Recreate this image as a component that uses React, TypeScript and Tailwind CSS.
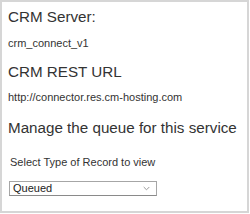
import React from "react";

export default function App() {
  return (
    <div className="w-[250px] h-[214px] bg-white" style={{ fontFamily: '"Liberation Sans", Arial, sans-serif' }}>
      <div className="w-[249px] h-[213px] border-2 border-[#d6d6d6] box-border pl-[6px] pt-[6px] text-[#333]">
        <div className="text-[15.2px] leading-[18px]">CRM Server:</div>
        <div className="mt-[11px] text-[11px] leading-[13px]">crm_connect_v1</div>
        <div className="mt-[13px] text-[15.2px] leading-[18px]">CRM REST URL</div>
        <div className="mt-[10px] text-[11px] leading-[13px]">http://connector.res.cm-hosting.com</div>
        <div className="mt-[15px] text-[15.2px] leading-[18px] whitespace-nowrap">Manage the queue for this service</div>
        <div className="mt-[19px] pl-[2px] text-[11px] leading-[13px]">Select Type of Record to view</div>
        <div className="mt-[12px] ml-[1px] w-[148px] h-[15px] border border-[#a6a6a6] border-b-[#8a8a8a] flex items-center justify-between pl-[3px] pr-[6px] box-border">
          <span className="text-[11px] leading-[13px] text-[#222]">Queued</span>
          <svg width="7" height="5" viewBox="0 0 7 5" fill="none">
            <path d="M0.7 1 L3.5 3.8 L6.3 1" stroke="#999" strokeWidth="1" />
          </svg>
        </div>
      </div>
    </div>
  );
}
